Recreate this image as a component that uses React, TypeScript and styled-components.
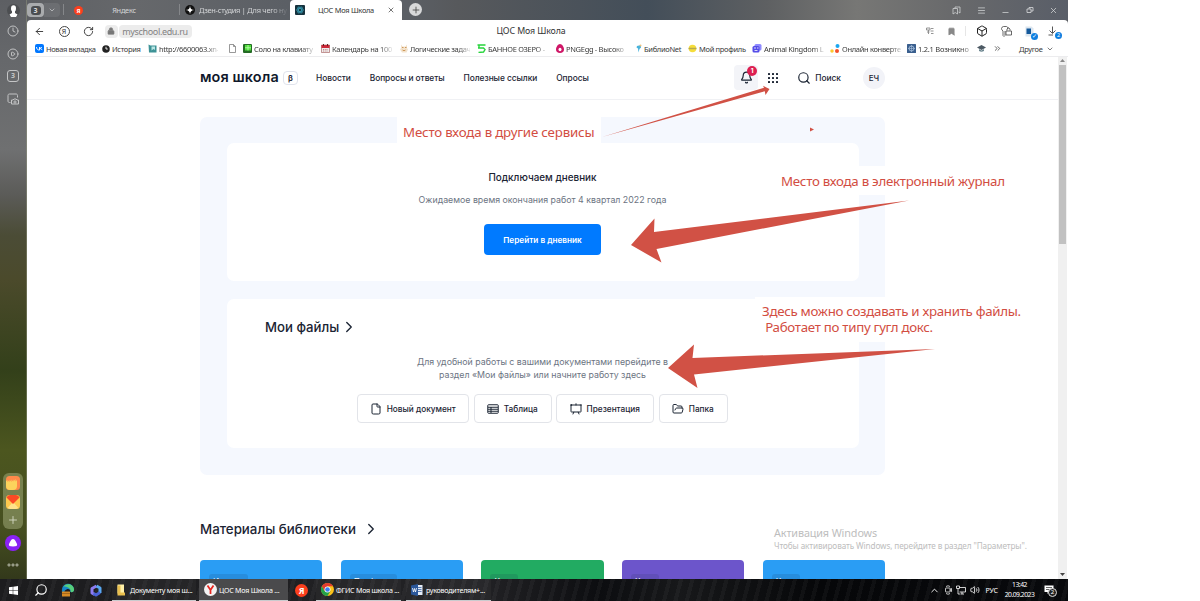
import React from 'react';
import styled, { createGlobalStyle } from 'styled-components';
import {
  ArrowLeft, RotateCw, Lock, Bookmark, Box, Menu, Minus, X, Plus, ChevronDown, ChevronRight, ChevronUp,
  Clock, CirclePlay, Search, File, FolderOpen, Bell, ChevronsRight, Volume2,
} from 'lucide-react';

const GlobalStyle = createGlobalStyle`
  * { box-sizing: border-box; }
  body {
    margin: 0;
    background: #fff;
    overflow: hidden;
    font-family: 'Inter', 'Noto Sans', sans-serif;
  }
  svg { display: block; flex: none; }
`;

const Desktop = styled.div`
  position: relative;
  width: 1068px;
  height: 601px;
  display: flex;
  flex-direction: column;
`;

const BrowserWindow = styled.div`
  height: 579px;
  display: flex;
  background: #5a5d62;
`;

const Sidebar = styled.aside`
  width: 27px;
  display: flex;
  flex-direction: column;
  align-items: center;
  padding-top: 3px;
  color: #c4c5c6;
  border-right: 1px solid rgba(150, 155, 130, 0.45);
  background: linear-gradient(
    180deg, #5d5f63 0, #66686b 60px, #6f7071 150px, #5b5b58 195px, #4b4c36 235px,
    #4b4a2b 280px, #33401a 370px, #4c561f 450px, #454e20 530px, #33391b 578px
  );
`;

const SideSlot = styled.div<{ $h: number }>`
  height: ${p => p.$h}px;
  display: flex;
  align-items: center;
  justify-content: center;
`;

const NumberBox = styled.div`
  width: 12px;
  height: 12px;
  border: 1px solid #c4c5c6;
  border-radius: 3px;
  font: 700 7px/10px 'Noto Sans', sans-serif;
  text-align: center;
`;

const Dock = styled.div`
  width: 20px;
  height: 56px;
  margin: auto 0 6px;
  padding: 3px 0;
  border-radius: 6px;
  background: rgba(190, 200, 150, 0.4);
  display: flex;
  flex-direction: column;
  align-items: center;
  justify-content: space-between;
`;

const MainColumn = styled.div`
  flex: 1;
  min-width: 0;
  display: flex;
  flex-direction: column;
`;

const TabStrip = styled.div`
  height: 20px;
  display: flex;
  align-items: stretch;
  font: 7.4px 'Noto Sans', sans-serif;
  letter-spacing: -0.25px;
  color: #d3d5d7;
  background: linear-gradient(90deg, #5e6064 0, #66686b 110px, #5b5f65 260px, #5b5f65 380px, #57595c 430px,
    #434e59 620px, #5e6062 740px, #777775 830px, #68696b 930px, #595e68 1041px);
`;

const TabGroup = styled.div`
  width: 34px;
  display: flex;
  align-items: center;
`;

const TabCount = styled.div`
  width: 17px;
  height: 14px;
  border-radius: 4px;
  background: #a9abad;
  display: flex;
  align-items: center;
  justify-content: center;

  span {
    width: 10px;
    height: 9px;
    border-radius: 3px;
    background: #4b4d50;
    color: #ddd;
    font-weight: 700;
    font-size: 7px;
    line-height: 9px;
    text-align: center;
  }
`;

const TabChevron = styled.div`
  width: 16px;
  height: 14px;
  border-radius: 0 4px 4px 0;
  background: rgba(255, 255, 255, 0.08);
  display: flex;
  align-items: center;
  justify-content: center;
`;

const Tab = styled.div<{ $w: number; $left?: number; $right?: number; $active?: boolean }>`
  width: ${p => p.$w}px;
  display: flex;
  align-items: center;
  padding: 0 ${p => p.$right ?? 7}px 0 ${p => p.$left ?? 5}px;
  gap: 4px;
  white-space: nowrap;
  ${p => p.$active && `
    background: #fff;
    color: #333;
    border-radius: 4px 4px 0 0;
  `}
`;

const TabTitle = styled.span<{ $center?: boolean }>`
  flex: 1;
  text-align: ${p => (p.$center ? 'center' : 'left')};
  ${p => !p.$center && 'mask-image: linear-gradient(90deg, #000 82%, rgba(0, 0, 0, 0.1));'}
`;

const StripDivider = styled.div<{ $gap?: number }>`
  width: 1px;
  height: 11px;
  margin: 4px 0 0 ${p => p.$gap ?? 0}px;
  background: #85878a;
`;

const NewTab = styled.div`
  width: 13px;
  height: 13px;
  margin: 3px 0 0 7px;
  border-radius: 50%;
  background: #d8d9da;
  color: #444;
  display: flex;
  align-items: center;
  justify-content: center;
`;

const WindowButtons = styled.div`
  margin-left: auto;
  display: flex;
  align-items: center;
  gap: 15.5px;
  padding-right: 10px;
`;

const MinimizeSlot = styled.div`
  padding-top: 5px;
`;

const Chrome = styled.div`
  background: #fff;
  border-radius: 4px 4px 0 0;
  font-family: 'Noto Sans', sans-serif;
  border-bottom: 1px solid #ececee;
`;

const Toolbar = styled.div`
  height: 22px;
  display: grid;
  grid-template-columns: 1fr auto 1fr;
  align-items: center;
  padding: 0 8px 0 7px;
  color: #333;
`;

const ToolGroup = styled.div<{ $gap: number; $end?: boolean }>`
  display: flex;
  align-items: center;
  gap: ${p => p.$gap}px;
  ${p => p.$end && 'justify-content: flex-end;'}
`;

const ToolDivider = styled.div`
  width: 1px;
  height: 10px;
  margin: 0 -3.5px;
  background: #e6e6e6;
`;

const YandexRing = styled.div`
  width: 11px;
  height: 11px;
  border: 1px solid #444;
  border-radius: 50%;
  font-size: 7px;
  line-height: 9px;
  text-align: center;
`;

const AddressBar = styled.div`
  display: flex;
  gap: 1px;
  height: 13px;
  margin-left: -3px;
`;

const AddressPart = styled.div<{ $w: number }>`
  width: ${p => p.$w}px;
  border-radius: 4px;
  background: #ececec;
  color: #828282;
  display: flex;
  align-items: center;
  justify-content: center;
  font-size: 9px;
  letter-spacing: -0.35px;
  line-height: 13px;
`;

const PageTitle = styled.div`
  font-size: 8.8px;
  letter-spacing: -0.1px;
  margin-left: -32px;
`;

const ToolIcon = styled.div<{ $before?: number }>`
  position: relative;
  margin-left: ${p => p.$before ?? 0}px;
`;

const ToolBadge = styled.div<{ $right: number }>`
  position: absolute;
  right: ${p => p.$right}px;
  bottom: -3px;
  width: 7px;
  height: 7px;
  border-radius: 50%;
  background: #0f7fe0;
  color: #fff;
  font-size: 5.5px;
  line-height: 7px;
  text-align: center;
`;

const BookmarkBar = styled.div`
  height: 14px;
  display: flex;
  align-items: center;
  padding: 0 0 1px 8px;
  font-size: 7.5px;
  line-height: 12px;
  color: #3a3a3a;
`;

const BookmarkItem = styled.div<{ $w: number }>`
  width: ${p => p.$w}px;
  display: flex;
  align-items: center;
  gap: 2px;
  flex: none;
`;

const BookmarkText = styled.span<{ $w: number; $ls?: number; $fade?: boolean }>`
  width: ${p => p.$w}px;
  white-space: nowrap;
  letter-spacing: ${p => p.$ls ?? -0.31}px;
  ${p => p.$fade && 'mask-image: linear-gradient(90deg, #000 80%, rgba(0, 0, 0, 0.15));'}
`;

const Viewport = styled.div`
  flex: 1;
  min-height: 0;
  display: flex;
  background: #fff;
`;

const Page = styled.div`
  flex: 1;
  overflow: hidden;
  color: #1b2433;
`;

const Scrollbar = styled.div`
  width: 9px;
  background: #f0f0f0;
  margin-right: 1px;
  display: flex;
  flex-direction: column;
  align-items: center;
  justify-content: space-between;
  padding: 2px 0 3px;
`;

const Thumb = styled.div`
  width: 7px;
  height: 179px;
  margin-bottom: auto;
  margin-top: 3px;
  background: #c1c1c1;
`;

const SiteHeader = styled.header`
  height: 43px;
  padding: 0 173px;
  border-bottom: 1px solid #f0f1f4;
  display: flex;
  align-items: center;
  font-size: 8.4px;
  font-weight: 500;
`;

const Logo = styled.div`
  width: 83px;
  margin-top: -3px;
  font: 600 14.4px 'Inter', sans-serif;
  letter-spacing: 0.12px;
  color: #10182b;
  white-space: nowrap;
`;

const Beta = styled.div`
  width: 15px;
  height: 14px;
  margin-top: -1px;
  border: 1px solid #e0e3ec;
  border-radius: 4px;
  text-align: center;
  font-size: 8px;
  line-height: 12px;
  font-weight: 600;
`;

const Nav = styled.nav`
  margin-left: 18px;
  display: flex;
  gap: 19px;
  letter-spacing: -0.06px;
  white-space: nowrap;
`;

const HeaderActions = styled.div`
  margin-left: auto;
  display: flex;
  align-items: center;
`;

const BellButton = styled.div`
  position: relative;
  width: 24px;
  height: 25px;
  margin: -1px 10px 0 0;
  border-radius: 4px;
  background: #f3f4f8;
  display: flex;
  align-items: center;
  justify-content: center;
`;

const BellCount = styled.div`
  position: absolute;
  top: 1px;
  right: 1px;
  width: 10px;
  height: 10px;
  border-radius: 50%;
  background: #dc1f51;
  color: #fff;
  font-size: 6.5px;
  font-weight: 700;
  line-height: 10px;
  text-align: center;
`;

const SearchLink = styled.div`
  display: flex;
  align-items: center;
  gap: 4px;
  margin-left: 19px;
`;

const Avatar = styled.div`
  width: 22px;
  height: 22px;
  margin-left: 22px;
  border-radius: 50%;
  background: #f2f3f8;
  font-size: 8px;
  line-height: 22px;
  text-align: center;
`;

const Panel = styled.section`
  width: 685px;
  height: 358px;
  margin: 17px 0 0 173px;
  padding: 26px 26px 27px 27px;
  border-radius: 7px;
  background: #f5f8fe;
  display: flex;
  flex-direction: column;
  gap: 18px;
`;

const Card = styled.div<{ $h: number }>`
  height: ${p => p.$h}px;
  border-radius: 7px;
  background: #fff;
  display: flex;
  flex-direction: column;
  align-items: center;
`;

const DiaryTitle = styled.h3`
  margin: 27px 0 0;
  padding-right: 1px;
  font-size: 9.9px;
  line-height: 15px;
  font-weight: 500;
`;

const Muted = styled.p<{ $top: number }>`
  margin: ${p => p.$top}px 0 0;
  padding-right: 1px;
  color: #6c7482;
  font-size: 8.8px;
  line-height: 13px;
  text-align: center;
`;

const PrimaryButton = styled.button`
  width: 117px;
  height: 31px;
  margin: 18px 1px 0 0;
  border: 0;
  padding: 0;
  border-radius: 4px;
  background: #007aff;
  color: #fff;
  font: 600 8.2px 'Inter', sans-serif;
`;

const SectionTitle = styled.h2<{ $size: number; $gap: number }>`
  margin: 0;
  display: flex;
  align-items: center;
  gap: ${p => p.$gap}px;
  font-size: ${p => p.$size}px;
  line-height: 18px;
  font-weight: 500;
  white-space: nowrap;
`;

const FilesHeading = styled.div`
  align-self: flex-start;
  margin: 19px 0 0 38px;
`;

const ActionRow = styled.div`
  display: flex;
  gap: 4.5px;
  margin: 13px 1px 0 0;
`;

const ActionButton = styled.button<{ $w: number }>`
  width: ${p => p.$w}px;
  height: 29px;
  padding: 0 1px 0 0;
  border: 1px solid #e2e4e9;
  border-radius: 4px;
  background: #fff;
  color: #1b2433;
  font: 500 8.25px 'Inter', sans-serif;
  display: flex;
  align-items: center;
  justify-content: center;
  gap: 5px;
  white-space: nowrap;
`;

const LibraryHeading = styled.div`
  margin: 45px 0 0 173px;
`;

const LibraryRow = styled.div`
  display: flex;
  gap: 18.5px;
  margin: 22px 0 0 173px;
`;

const LibraryCard = styled.div<{ $color: string }>`
  width: 122.2px;
  height: 60px;
  padding: 14px 0 0 9px;
  border-radius: 4px;
  background: ${p => p.$color};
`;

const Tag = styled.div<{ $w: number }>`
  width: ${p => p.$w}px;
  height: 14px;
  padding-left: 4px;
  border-radius: 3px;
  background: rgba(20, 40, 70, 0.13);
  color: #fff;
  font-size: 8px;
  line-height: 15px;
`;

const Taskbar = styled.footer`
  height: 22px;
  display: flex;
  align-items: center;
  color: #fff;
  font: 7.1px 'Noto Sans', sans-serif;
  background:
    repeating-linear-gradient(105deg, transparent 0 7px, rgba(255, 255, 255, 0.035) 7px 11px),
    linear-gradient(90deg, #1c1c1e 0, #222225 480px, #0c0d10 600px, #17181a 680px, #060709 820px, #08090c 1068px);
`;

const TaskIcon = styled.div<{ $w: number }>`
  width: ${p => p.$w}px;
  display: flex;
  justify-content: center;
`;

const SearchGlyph = styled(Search)`
  transform: scaleX(-1);
`;

const Task = styled.div<{ $w: number; $before?: number; $gap?: number; $active?: boolean }>`
  width: ${p => p.$w}px;
  height: 22px;
  padding-left: 5px;
  margin: 0 3px 0 ${p => p.$before ?? 0}px;
  display: flex;
  align-items: center;
  gap: ${p => p.$gap ?? 2}px;
  white-space: nowrap;
  letter-spacing: -0.24px;
  border-bottom: 1px solid #c9cbce;
  background: ${p => (p.$active ? '#4a4a4c' : 'rgba(255,255,255,0.03)')};
`;

const Tray = styled.div`
  margin-left: auto;
  display: flex;
  align-items: center;
  padding-right: 14px;
  gap: 3.5px;
`;

const Language = styled.span`
  margin-left: 2px;
  margin-right: 1px;
  font-size: 7px;
`;

const ClockText = styled.div`
  width: 34px;
  margin-left: 0;
  margin-right: 1px;
  font-size: 6.8px;
  line-height: 10px;
  text-align: center;
  letter-spacing: -0.5px;
`;

const Notice = styled.div`
  position: relative;
  margin-left: 3px;
`;

const NoticeCount = styled.div`
  position: absolute;
  left: 4px;
  top: 3px;
  width: 9px;
  height: 9px;
  border: 1px solid #ddd;
  border-radius: 50%;
  background: #222;
  font-size: 6px;
  line-height: 7px;
  text-align: center;
`;

const Watermark = styled.div`
  position: absolute;
  left: 774px;
  top: 526px;
  color: #bdbdbd;
  font: 8.2px/12px 'Noto Sans', sans-serif;
  letter-spacing: -0.11px;
  white-space: nowrap;

  strong {
    display: block;
    font-weight: 400;
    font-size: 10.8px;
    line-height: 14px;
  }
`;

const Note = styled.div<{ $x: number; $y: number; $w: number; $h: number; $pad: string; $ls: number }>`
  position: absolute;
  left: ${p => p.$x}px;
  top: ${p => p.$y}px;
  width: ${p => p.$w}px;
  height: ${p => p.$h}px;
  padding: ${p => p.$pad};
  background: #fff;
  color: #d24d42;
  font: 13.3px/16px 'Noto Sans', sans-serif;
  letter-spacing: ${p => p.$ls}px;
  white-space: pre;
`;

const Arrows = styled.svg`
  position: absolute;
  left: 0;
  top: 0;
  pointer-events: none;
`;

const YandexMark = ({ size }: { size: number }) => (
  <svg width={size} height={size} viewBox="0 0 20 20">
    <circle cx="10" cy="10" r="10" fill="#fc3f1d" />
    <text x="10" y="14.8" fontSize="13" fontWeight="700" fill="#fff" textAnchor="middle" fontFamily="Noto Sans" letterSpacing="0">Я</text>
  </svg>
);

const TableIcon = () => (
  <svg width="12" height="12" viewBox="0 0 24 24" fill="none" stroke="currentColor" strokeWidth="2">
    <rect x="1.500" y="3.500" width="21" height="17" rx="1.500" />
    <path d="M2 8.500h20M2 12.500h20M2 16.500h20M8 8v12" />
  </svg>
);

const BoardIcon = () => (
  <svg width="12" height="12" viewBox="0 0 24 24" fill="none" stroke="currentColor" strokeWidth="2" strokeLinecap="round">
    <rect x="2" y="4" width="20" height="14" rx="1" />
    <path d="M12 4V1.500M7.500 18.500L6 22M16.500 18.500L18 22M0.500 4h3M20.500 4h3" />
  </svg>
);

const icons: Record<string, React.ReactNode> = {
  vk: (
    <svg width="9" height="9" viewBox="0 0 18 18">
      <rect width="18" height="18" rx="4" fill="#07f" />
      <path d="M3 6c.3 4 2.400 6.200 6 6.200V6M9 9c2 0 3.800-1.500 4.500-3M9 9c2.500 0 4.500 1.500 5.500 3.200" stroke="#fff" strokeWidth="1.900" fill="none" />
    </svg>
  ),
  history: (
    <svg width="8" height="8" viewBox="0 0 18 18">
      <circle cx="9" cy="9" r="8.500" fill="#222" />
      <path d="M9 4v5h4" stroke="#fff" strokeWidth="2" fill="none" />
    </svg>
  ),
  site: (
    <svg width="9" height="9" viewBox="0 0 18 18">
      <path d="M1 1l4 2h12v14H2z" fill="#3d9296" />
      <path d="M7 5h7v7l-3-2-4 3z" fill="#b9e6e4" />
    </svg>
  ),
  doc: (
    <svg width="7" height="9" viewBox="0 0 14 18" fill="#fff" stroke="#777" strokeWidth="1.500">
      <path d="M1 1h8l4 4v12H1zM9 1v4h4" />
    </svg>
  ),
  piano: (
    <svg width="9" height="9" viewBox="0 0 18 18">
      <rect width="18" height="18" rx="2" fill="#246b25" />
      <path d="M4 2h12v11H4z" fill="#4fe03a" />
      <path d="M4 7.500h12M10 2v11" stroke="#c7ffba" strokeWidth="1.500" />
    </svg>
  ),
  calendar: (
    <svg width="9" height="9" viewBox="0 0 18 18">
      <path d="M1 2h16v15H1z" fill="#eee" stroke="#8c3030" />
      <path d="M1 2h16v6H1z" fill="#cc2939" />
      <path d="M5 0v4M13 0v4" stroke="#622" strokeWidth="2" />
      <path d="M4 11h10M4 14h10" stroke="#b66" strokeWidth="1.500" strokeDasharray="2 1.500" />
    </svg>
  ),
  logic: (
    <svg width="8" height="9" viewBox="0 0 16 18">
      <path d="M2 1l3 4h6l3-4v7l2 3-3 6H4l-4-6 2-3z" fill="#f3e3cd" />
      <path d="M4 7h3M10 7h3M5 12q3 3 6 0" stroke="#c4873e" strokeWidth="1.600" fill="none" />
    </svg>
  ),
  lake: (
    <svg width="9" height="9" viewBox="0 0 18 18">
      <path d="M1 2h16M4 2v6h9l3 3-3 5-10 1M2 8h4" stroke="#26d43b" strokeWidth="2.800" fill="none" />
    </svg>
  ),
  egg: (
    <svg width="8" height="9" viewBox="0 0 16 18">
      <path d="M8 0c4 0 8 6 8 11 0 4-3 7-8 7s-8-3-8-7C0 6 4 0 8 0z" fill="#cf1767" />
      <ellipse cx="8" cy="11" rx="3" ry="3.500" fill="#fff" />
    </svg>
  ),
  biblio: (
    <svg width="6" height="9" viewBox="0 0 12 18">
      <path d="M2 4l8-2v5l-3 3-2 7-1-8-3-2z" fill="#49b3dc" />
      <circle cx="9" cy="3" r="2" fill="#f1c27a" />
    </svg>
  ),
  profile: (
    <svg width="9" height="9" viewBox="0 0 18 18">
      <circle cx="9" cy="9" r="7.500" fill="#f5dd3b" />
      <path d="M1 7.500h16v3H1z" fill="#b5a850" />
    </svg>
  ),
  animal: (
    <svg width="10" height="9" viewBox="0 0 20 18">
      <rect x="5" y="0" width="14" height="13" rx="3" fill="#8f8bff" />
      <rect x="1" y="4" width="14" height="13" rx="3" fill="#554de8" />
      <path d="M4 8h4M10 8h3M5 13h6" stroke="#fff" strokeWidth="1.600" />
    </svg>
  ),
  convert: (
    <svg width="10" height="9" viewBox="0 0 20 18">
      <circle cx="15" cy="4" r="4" fill="#1ca7f0" />
      <circle cx="14" cy="14" r="4" fill="#f4502a" />
      <circle cx="4" cy="14" r="3.500" fill="#fdc92e" />
    </svg>
  ),
  atom: (
    <svg width="9" height="9" viewBox="0 0 18 18">
      <rect width="18" height="18" rx="1" fill="#3a5f8e" />
      <circle cx="9" cy="9" r="5" fill="none" stroke="#bcd2ea" strokeWidth="1.500" />
      <path d="M9 2v14M2 9h14" stroke="#bcd2ea" />
    </svg>
  ),
};

// slot is the whole item, text is the room for the label inside it
const bookmarks = [
  { icon: 'vk', label: 'Новая вкладка', slot: 67, text: 54, ls: -0.35 },
  { icon: 'history', label: 'История', slot: 46, text: 32 },
  { icon: 'site', label: 'http://6600063.xn-', slot: 81, text: 59, fade: true },
  { icon: 'doc', label: '', slot: 14, text: 0 },
  { icon: 'piano', label: 'Соло на клавиату', slot: 78, text: 60, fade: true },
  { icon: 'calendar', label: 'Календарь на 100', slot: 79, text: 60, fade: true },
  { icon: 'logic', label: 'Логические задач', slot: 77, text: 60, fade: true },
  { icon: 'lake', label: 'БАННОЕ ОЗЕРО -', slot: 79, text: 60, fade: true },
  { icon: 'egg', label: 'PNGEgg - Высоко', slot: 80, text: 60, fade: true },
  { icon: 'biblio', label: 'БиблиоNet', slot: 52, text: 42 },
  { icon: 'profile', label: 'Мой профиль', slot: 64, text: 50 },
  { icon: 'animal', label: 'Animal Kingdom L', slot: 78, text: 61, fade: true },
  { icon: 'convert', label: 'Онлайн конверте', slot: 77, text: 60, fade: true },
  { icon: 'atom', label: '1.2.1 Возникно', slot: 70, text: 54, fade: true, ls: -0.25 },
];

const libraryCards = [
  { color: '#2a9df4', tag: 'История', w: 39 },
  { color: '#2a9df4', tag: 'Профиль', w: 47 },
  { color: '#22ab62', tag: 'Химия', w: 28 },
  { color: '#6c55cb', tag: 'Химия', w: 28 },
  { color: '#2a9df4', tag: 'Химия', w: 28 },
];

const SideBar = () => (
  <Sidebar>
    <SideSlot $h={15}>
      <svg width="13" height="13" viewBox="0 0 26 26">
        <circle cx="13" cy="13" r="13" fill="#4c4e51" />
        <ellipse cx="13" cy="9" rx="5" ry="6.500" fill="#fff" />
        <path d="M10 13h6v5l5 3-3 5H8l-3-5 5-3z" fill="#fff" />
      </svg>
    </SideSlot>
    <SideSlot $h={26}><Clock size={12} strokeWidth={1.9} /></SideSlot>
    <SideSlot $h={19}><CirclePlay size={12} strokeWidth={1.9} /></SideSlot>
    <SideSlot $h={26}><NumberBox>3</NumberBox></SideSlot>
    <SideSlot $h={19}>
      <svg width="12" height="12" viewBox="0 0 24 24" fill="none" stroke="currentColor" strokeWidth="2">
        <path d="M7 19H5c-2 0-3-1-3-3V5c0-2 1-3 3-3h13c2 0 3 1 3 3v4M9 14h3l2-2h4l2 2h3v8H9z" />
        <circle cx="16" cy="18" r="2.200" />
      </svg>
    </SideSlot>
    <Dock>
      <svg width="14" height="14" viewBox="0 0 28 28">
        <rect width="28" height="28" rx="7" fill="#ff8a4a" />
        <path d="M0 10l3-2v4l4-4v4l4-5v5l4-5v4l4-5v5l3-3v12q0 8-8 8H8q-8 0-8-8z" fill="#fcd45c" />
      </svg>
      <svg width="14" height="14" viewBox="0 0 28 28">
        <rect width="28" height="28" rx="7" fill="#fdc94e" />
        <path d="M3 26L14 14l11 12-5 2H8z" fill="#ffe28a" />
        <path d="M1 5Q3 0 8 0h12q5 0 7 5L14 18z" fill="#fb4a25" />
      </svg>
      <Plus size={12} strokeWidth={1.8} color="#d5d9c4" />
    </Dock>
    <SideSlot $h={16}>
      <svg width="16" height="16" viewBox="0 0 32 32">
        <circle cx="16" cy="16" r="16" fill="#8a22f5" />
        <path d="M16 8q3 0 5 4l3 6q2 5-8 5t-8-5l3-6q2-4 5-4z" fill="#fff" />
      </svg>
    </SideSlot>
    <SideSlot $h={28}>
      <svg width="12" height="4" viewBox="0 0 24 8" fill="none" stroke="#d7d9cd" strokeWidth="1.600">
        <circle cx="4" cy="4" r="2.200" /><circle cx="12" cy="4" r="2.200" /><circle cx="20" cy="4" r="2.200" />
      </svg>
    </SideSlot>
  </Sidebar>
);

const Tabs = () => (
  <TabStrip>
    <TabGroup>
      <TabCount><span>3</span></TabCount>
      <TabChevron><ChevronDown size={8} /></TabChevron>
    </TabGroup>
    <StripDivider $gap={2} />
    <Tab $w={115} $left={10} $right={18}>
      <YandexMark size={9} />
      <TabTitle $center>Яндекс</TabTitle>
    </Tab>
    <StripDivider />
    <Tab $w={110} $right={4}>
      <svg width="10" height="10" viewBox="0 0 20 20">
        <circle cx="10" cy="10" r="10" fill="#111" />
        <path d="M10 1q0 9 9 9-9 0-9 9 0-9-9-9 9 0 9-9z" fill="#fff" />
      </svg>
      <TabTitle>Дзен-студия | Для чего ну</TabTitle>
    </Tab>
    <Tab $w={112} $active>
      <svg width="10" height="10" viewBox="0 0 20 20">
        <rect width="20" height="20" rx="2" fill="#16323d" />
        <g fill="none" stroke="#3aa0b8" strokeWidth="1.500">
          <ellipse cx="10" cy="10" rx="7" ry="3" />
          <ellipse cx="10" cy="10" rx="7" ry="3" transform="rotate(60 10 10)" />
          <ellipse cx="10" cy="10" rx="7" ry="3" transform="rotate(120 10 10)" />
        </g>
      </svg>
      <TabTitle $center>ЦОС Моя Школа</TabTitle>
      <X size={8} />
    </Tab>
    <NewTab><Plus size={10} /></NewTab>
    <WindowButtons>
      <svg width="9" height="9" viewBox="0 0 18 18" fill="none" stroke="currentColor" strokeWidth="1.500">
        <path d="M6 5V2h10v12l-3-2M2 5h9v11l-4.500-3L2 16z" />
      </svg>
      <Menu size={9} />
      <MinimizeSlot><Minus size={9} /></MinimizeSlot>
      <svg width="8" height="8" viewBox="0 0 16 16" fill="none" stroke="currentColor" strokeWidth="1.700">
        <path d="M2 6h8v7H2zM6 6V3h8v7h-4" />
      </svg>
      <X size={9} />
    </WindowButtons>
  </TabStrip>
);

const BrowserChrome = () => (
  <Chrome>
    <Toolbar>
      <ToolGroup $gap={13.5}>
        <ArrowLeft size={11} />
        <YandexRing>Я</YandexRing>
        <RotateCw size={11} />
        <AddressBar>
          <AddressPart $w={13}><Lock size={8} fill="#777" /></AddressPart>
          <AddressPart $w={73}>myschool.edu.ru</AddressPart>
        </AddressBar>
      </ToolGroup>
      <PageTitle>ЦОС Моя Школа</PageTitle>
      <ToolGroup $gap={13} $end>
        <svg width="8" height="8" viewBox="0 0 16 16" fill="none" stroke="#888" strokeWidth="1.800">
          <path d="M1 2h7v4H1zM5 6v8M10 3h5M9 8h6M10 13h5M2 10h5" />
        </svg>
        <Bookmark size={9} fill="#888" color="#888" />
        <ToolDivider />
        <Box size={12} color="#222" />
        <svg width="11" height="11" viewBox="0 0 22 22" fill="none" stroke="#444" strokeWidth="1.600">
          <path d="M8 10v9l-2 2-2-2v-9Q1 8 1 5t4-4h6q3 1 3 4v1" />
          <path d="M12 9V6q3-5 6 0v3M10 10h11v8H10z" />
        </svg>
        <ToolIcon>
          <svg width="9" height="11" viewBox="0 0 18 22">
            <path d="M1 1h12l4 4v16H1z" fill="#dce6ef" />
            <path d="M3 5h9v11H3z" fill="#14599b" />
          </svg>
          <ToolBadge $right={-4}>✓</ToolBadge>
        </ToolIcon>
        <ToolIcon $before={1.5}>
          <svg width="12" height="10" viewBox="0 0 24 20" fill="none" stroke="#444" strokeWidth="1.800">
            <path d="M9 1v13M3 9l6 6 6-6M1 18h9" />
          </svg>
          <ToolBadge $right={-2}>2</ToolBadge>
        </ToolIcon>
      </ToolGroup>
    </Toolbar>
    <BookmarkBar>
      {bookmarks.map((b, index) => (
        <BookmarkItem key={index} $w={b.slot}>
          {icons[b.icon]}
          <BookmarkText $w={b.text} $ls={b.ls} $fade={b.fade}>{b.label}</BookmarkText>
        </BookmarkItem>
      ))}
      <BookmarkItem $w={16}>
        <svg width="9" height="7" viewBox="0 0 18 14">
          <path d="M9 0l9 5-9 5-9-5z" fill="#4c5963" />
          <path d="M4 8v4q5 3 10 0V8l-5 3z" fill="#6d8791" />
        </svg>
      </BookmarkItem>
      <BookmarkItem $w={26}><ChevronsRight size={9} /></BookmarkItem>
      <BookmarkItem $w={38}>
        <BookmarkText $w={25}>Другое</BookmarkText>
        <ChevronDown size={8} />
      </BookmarkItem>
    </BookmarkBar>
  </Chrome>
);

const Site = () => (
  <Page>
    <SiteHeader>
      <Logo>моя школа</Logo>
      <Beta>β</Beta>
      <Nav>
        <span>Новости</span>
        <span>Вопросы и ответы</span>
        <span>Полезные ссылки</span>
        <span>Опросы</span>
      </Nav>
      <HeaderActions>
        <BellButton>
          <Bell size={13} strokeWidth={2.2} />
          <BellCount>1</BellCount>
        </BellButton>
        <svg width="10" height="10" viewBox="0 0 20 20" fill="#1b2433">
          {[0, 8, 16].map(y => [0, 8, 16].map(x => <rect key={`${x}-${y}`} x={x} y={y} width="4" height="4" rx="1" />))}
        </svg>
        <SearchLink>
          <Search size={14} strokeWidth={2} />
          Поиск
        </SearchLink>
        <Avatar>ЕЧ</Avatar>
      </HeaderActions>
    </SiteHeader>

    <Panel>
      <Card $h={138}>
        <DiaryTitle>Подключаем дневник</DiaryTitle>
        <Muted $top={8}>Ожидаемое время окончания работ 4 квартал 2022 года</Muted>
        <PrimaryButton>Перейти в дневник</PrimaryButton>
      </Card>
      <Card $h={149}>
        <FilesHeading>
          <SectionTitle $size={13.2} $gap={1}>Мои файлы <ChevronRight size={18} strokeWidth={1.8} /></SectionTitle>
        </FilesHeading>
        <Muted $top={19}>
          Для удобной работы с вашими документами перейдите в
          <br />
          раздел «Мои файлы» или начните работу здесь
        </Muted>
        <ActionRow>
          <ActionButton $w={112}><File size={12} />Новый документ</ActionButton>
          <ActionButton $w={78}><TableIcon />Таблица</ActionButton>
          <ActionButton $w={98}><BoardIcon />Презентация</ActionButton>
          <ActionButton $w={69}><FolderOpen size={12} />Папка</ActionButton>
        </ActionRow>
      </Card>
    </Panel>

    <LibraryHeading>
      <SectionTitle $size={13.3} $gap={6}>Материалы библиотеки <ChevronRight size={18} strokeWidth={1.8} /></SectionTitle>
    </LibraryHeading>
    <LibraryRow>
      {libraryCards.map((card, index) => (
        <LibraryCard key={index} $color={card.color}>
          <Tag $w={card.w}>{card.tag}</Tag>
        </LibraryCard>
      ))}
    </LibraryRow>
  </Page>
);

const WindowsTaskbar = () => (
  <Taskbar>
    <TaskIcon $w={27}>
      <svg width="9" height="9" viewBox="0 0 18 18" fill="#fff">
        <path d="M0 2.500l7.500-1v7H0zM8.500 1.400L18 0v8.500H8.500zM0 9.500h7.500v7L0 15.500zM8.500 9.500H18V18l-9.500-1.400z" />
      </svg>
    </TaskIcon>
    <TaskIcon $w={27}><SearchGlyph size={14} /></TaskIcon>
    <TaskIcon $w={28}>
      <svg width="14" height="14" viewBox="0 0 28 28">
        <path d="M2 15A12 12 0 0 1 26 12c1 5-3 7-7 6 0-5-4-7-8-5-5 2-6 8-2 13-4-2-7-6-7-11z" fill="#1787c9" />
        <path d="M5 7C11-1 25 2 26 12c1 5-3 7-7 6 2-6-5-11-14-11z" fill="#58cf7a" />
        <rect x="2" y="17" width="16" height="10" rx="1" fill="#d68a25" />
        <path d="M2 21h16" stroke="#7d4a10" />
      </svg>
    </TaskIcon>
    <TaskIcon $w={27}>
      <svg width="12" height="13" viewBox="0 0 24 26" fill="none" strokeWidth="6" strokeLinejoin="round">
        <path d="M13 4L4 9v9l5 3" stroke="#8d7cf0" />
        <path d="M13 4l7 4v10" stroke="#58a8f2" />
        <path d="M20 17l-8 5-5-3" stroke="#4a62d8" />
      </svg>
    </TaskIcon>
    <Task $w={84} $before={3} $gap={4}>
      <svg width="9" height="12" viewBox="0 0 18 24">
        <path d="M1 1h13v18H1z" fill="#fff0a8" />
        <path d="M1 3h6v20H1zM7 17h9v6H7z" fill="#e9bf4f" />
      </svg>
      Документу моя ш...
    </Task>
    <Task $w={89} $active>
      <svg width="13" height="13" viewBox="0 0 26 26">
        <circle cx="13" cy="13" r="13" fill="#f2f2f2" />
        <path d="M7 5l6 9v8M19 5l-6 9" stroke="#e52620" strokeWidth="3.500" fill="none" />
      </svg>
      ЦОС Моя Школа ...
    </Task>
    <TaskIcon $w={20}><YandexMark size={13} /></TaskIcon>
    <Task $w={85} $before={5}>
      <svg width="13" height="13" viewBox="0 0 26 26">
        <circle cx="13" cy="13" r="13" fill="#fbc11a" />
        <path d="M1.700 6.500A13 13 0 0 1 24.300 6.500H13L7 16z" fill="#e33b2e" />
        <path d="M1.700 6.500A13 13 0 0 0 13 26l6-10H7z" fill="#24a148" />
        <circle cx="13" cy="13" r="6" fill="#fff" />
        <circle cx="13" cy="13" r="4.600" fill="#3d7df0" />
      </svg>
      ФГИС Моя школа ...
    </Task>
    <Task $w={85} $before={2} $gap={3}>
      <svg width="12" height="12" viewBox="0 0 24 24">
        <path d="M10 2h13v20H10z" fill="#e5ecf7" />
        <path d="M14 7h7M14 11h7M14 15h7" stroke="#2b579a" strokeWidth="1.500" />
        <path d="M0 3l14-3v24L0 21z" fill="#2b579a" />
        <path d="M3 8l2 8 2-7 2 7 2-8" stroke="#fff" strokeWidth="1.600" fill="none" />
      </svg>
      руководителям+...
    </Task>
    <Tray>
      <ChevronUp size={11} />
      <svg width="9" height="10" viewBox="0 0 18 20" fill="none" stroke="#fff" strokeWidth="1.500">
        <rect x="3" y="6" width="9" height="8" rx="1" />
        <path d="M12 9l3-2v6l-3-2M4 3q4-3 8 0M4 17q4 3 8 0" />
      </svg>
      <svg width="10" height="10" viewBox="0 0 20 20" fill="none" stroke="#fff" strokeWidth="1.600">
        <path d="M7 5h12v9H7M12 14v4M9 18h7M1 2h6v5H1zM4 7v11h4" />
      </svg>
      <Volume2 size={10} />
      <Language>РУС</Language>
      <ClockText>13:42<br />20.09.2023</ClockText>
      <Notice>
        <svg width="10" height="10" viewBox="0 0 20 20">
          <path d="M1 1h18v13h-8l-4 4v-4H1z" fill="#fff" />
          <path d="M4 5h12M4 9h12" stroke="#333" strokeWidth="1.500" />
        </svg>
        <NoticeCount>2</NoticeCount>
      </Notice>
    </Tray>
  </Taskbar>
);

const App: React.FC = () => (
  <>
    <GlobalStyle />
    <Desktop>
      <BrowserWindow>
        <SideBar />
        <MainColumn>
          <Tabs />
          <BrowserChrome />
          <Viewport>
            <Site />
            <Scrollbar>
              <svg width="5" height="3" viewBox="0 0 10 6"><path d="M5 0l5 6H0z" fill="#888" /></svg>
              <Thumb />
              <svg width="5" height="3" viewBox="0 0 10 6"><path d="M5 6l5-6H0z" fill="#444" /></svg>
            </Scrollbar>
          </Viewport>
        </MainColumn>
      </BrowserWindow>
      <WindowsTaskbar />

      <Watermark>
        <strong>Активация Windows</strong>
        Чтобы активировать Windows, перейдите в раздел "Параметры".
      </Watermark>
      <Note $x={397} $y={117} $w={204} $h={27} $pad="7px 0 0 6px" $ls={-0.18}>Место входа в другие сервисы</Note>
      <Note $x={772} $y={166} $w={240} $h={29} $pad="7px 0 0 9px" $ls={-0.26}>Место входа в электронный журнал</Note>
      <Note $x={755} $y={297} $w={272} $h={45} $pad="6px 0 0 7px" $ls={-0.29}>{'Здесь можно создавать и хранить файлы.\n Работает по типу гугл докс.'}</Note>
      <Arrows width="1068" height="579" viewBox="0 0 1068 579" fill="#d15145">
        <path d="M602 137L764 87.800 763 85.800 769.500 89 765.500 95 764.800 91.300z" />
        <path d="M631 245L654.500 218.500 654 232 909 200.500 656.500 249 661.500 262.500z" />
        <path d="M668 368L694 344.500 692.500 358 935 349 694 374.500 697.500 388z" />
        <path d="M810 127.500L814 129.500 810 131.500z" />
      </Arrows>
    </Desktop>
  </>
);

export default App;
